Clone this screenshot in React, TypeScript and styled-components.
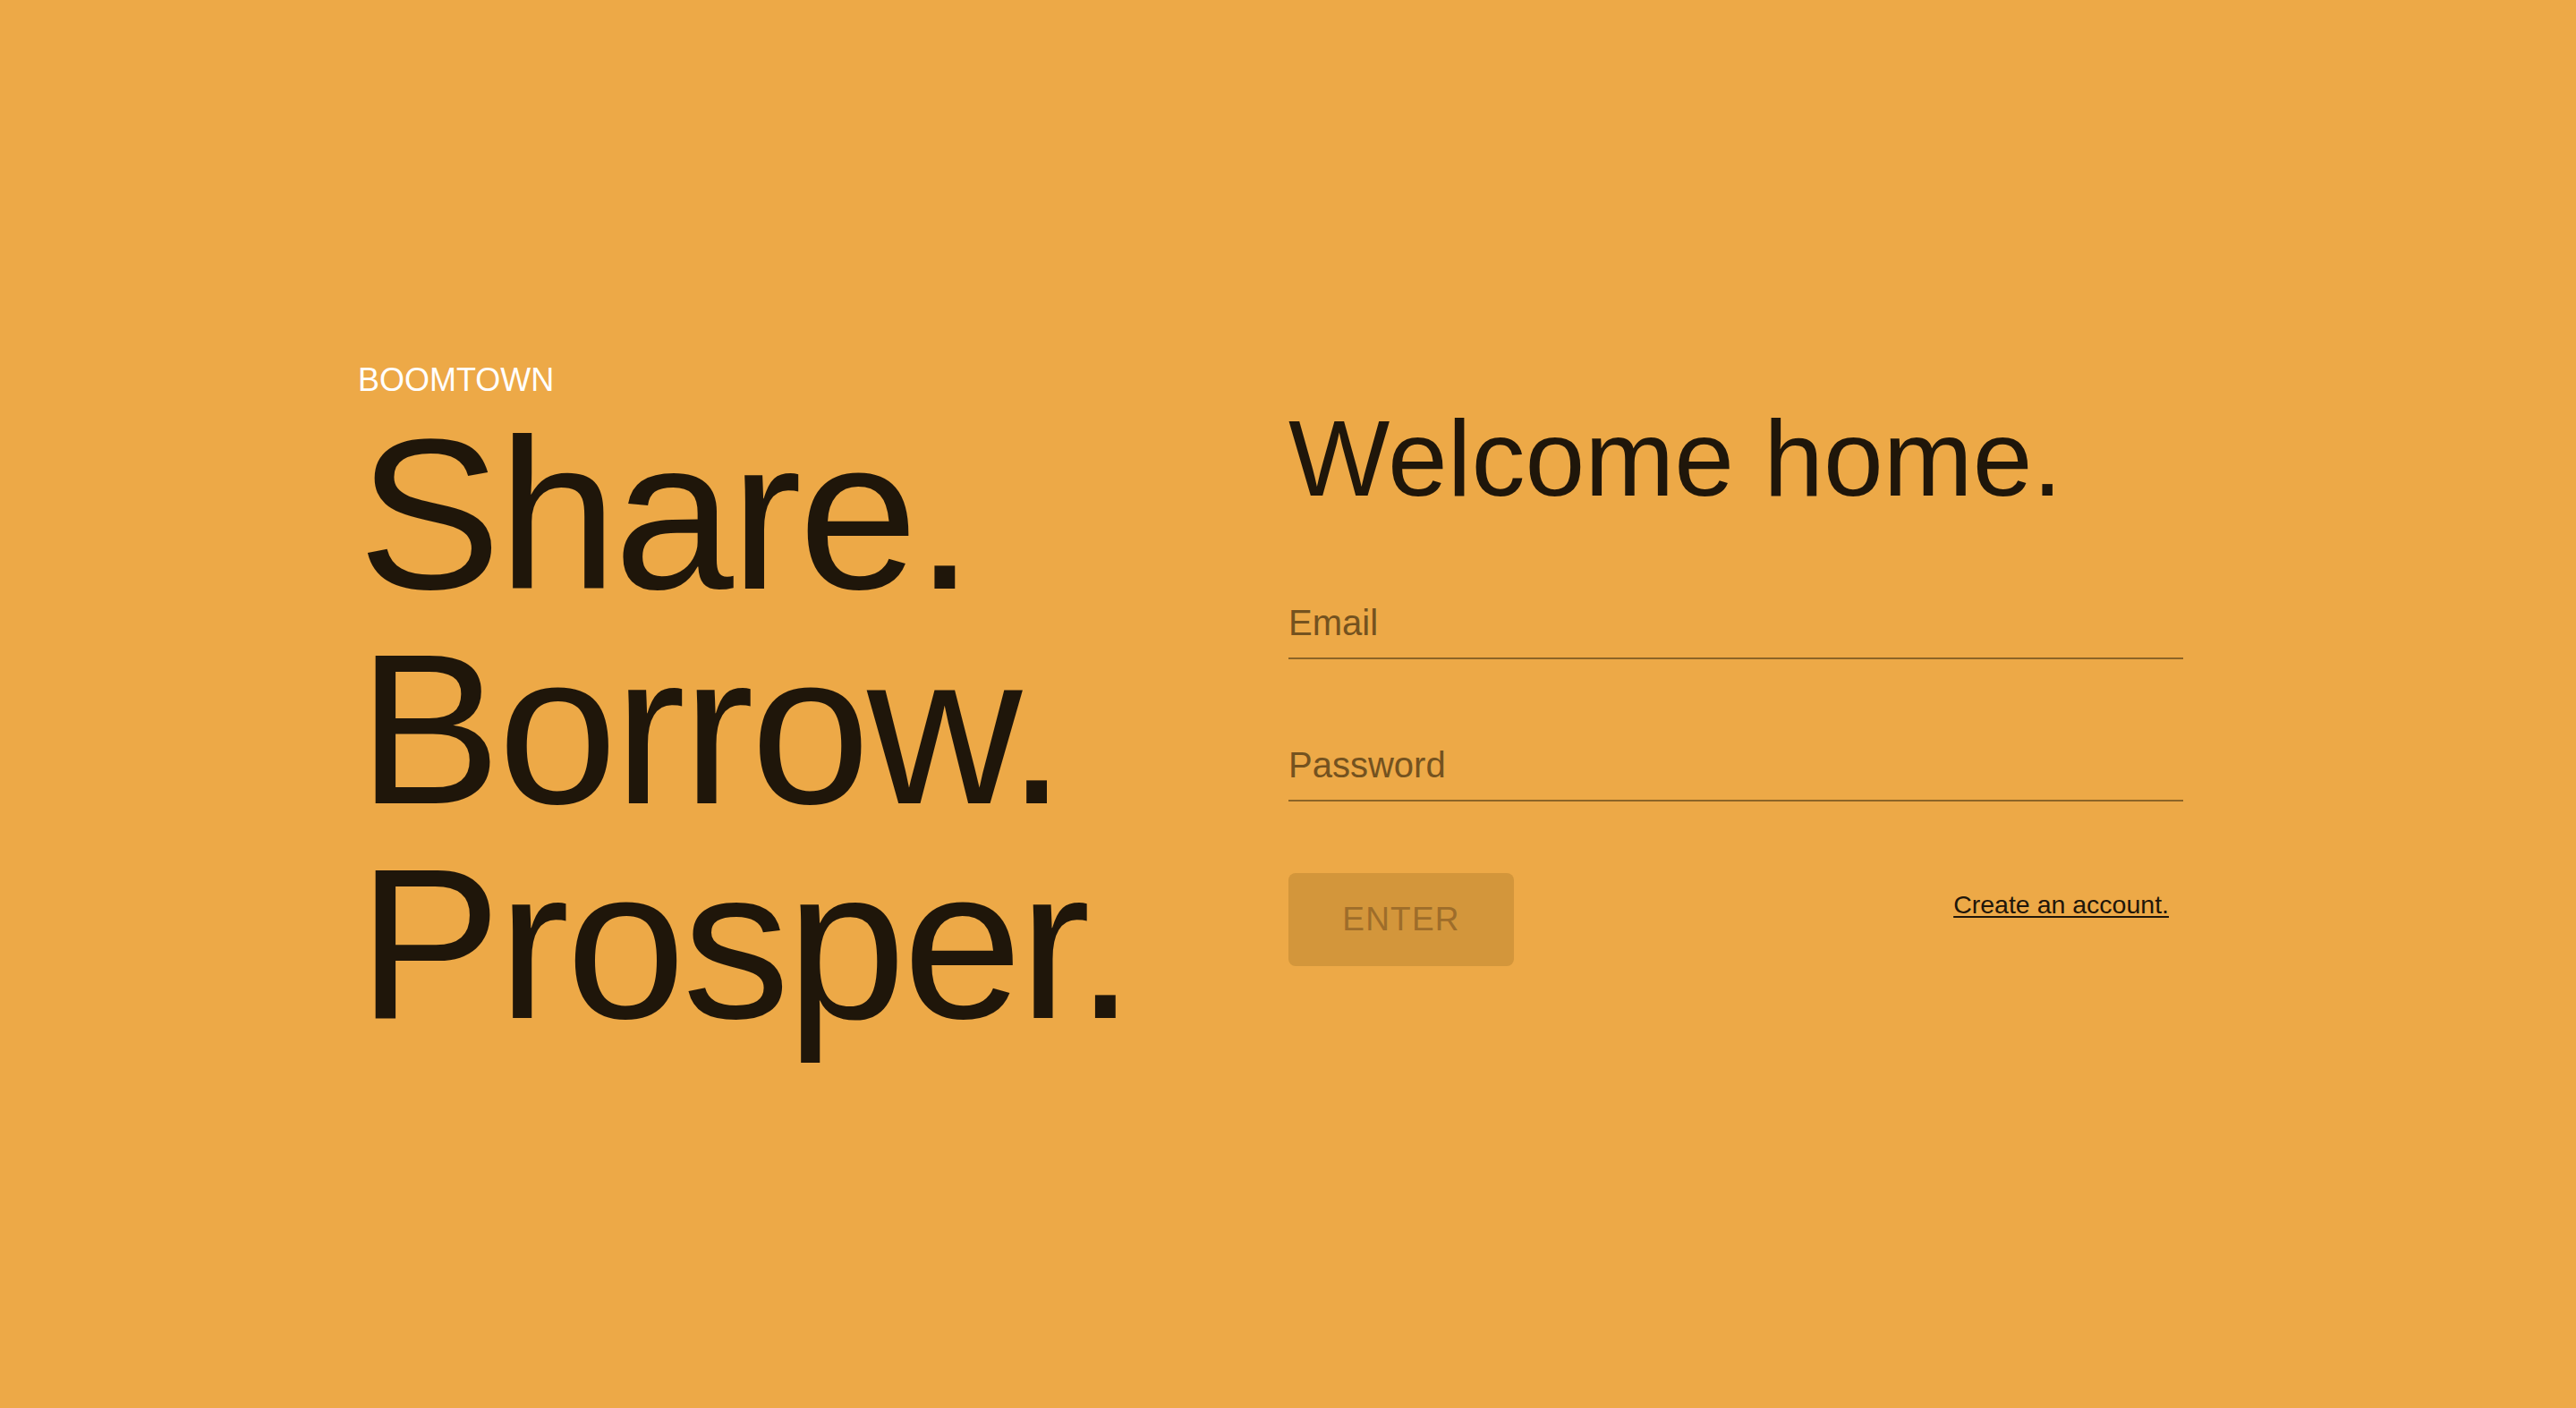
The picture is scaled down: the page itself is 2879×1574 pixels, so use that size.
import React from "react";
import styled, { createGlobalStyle } from "styled-components";

const GlobalStyle = createGlobalStyle`
  html, body {
    margin: 0;
    padding: 0;
    background: #eda947;
  }
  body {
    font-family: "Liberation Sans", Arial, Helvetica, sans-serif;
  }
  * { box-sizing: border-box; }
`;

const Page = styled.main`
  min-height: 100vh;
  background: #eda947;
  display: flex;
  align-items: flex-start;
  padding: 407px 0 0 400px;
`;

const Hero = styled.section`
  width: 1040px;
  display: flex;
  flex-direction: column;
`;

const Brand = styled.div`
  font-size: 36px;
  line-height: 36px;
  color: #ffffff;
  margin-bottom: 12px;
`;

const Headline = styled.h1`
  margin: 0;
  font-size: 240px;
  line-height: 240px;
  font-weight: 400;
  letter-spacing: -0.015em;
  color: #1f160a;
`;

const Line = styled.span`
  display: block;
`;

const Panel = styled.section`
  width: 1000px;
  margin-top: 45px;
  display: flex;
  flex-direction: column;
`;

const Welcome = styled.h2`
  margin: 0 0 104px;
  font-size: 120px;
  line-height: 120px;
  font-weight: 400;
  color: #1f160a;
`;

const Field = styled.label<{ $gap?: number }>`
  display: block;
  padding-bottom: 19px;
  border-bottom: 2px solid #8c6427;
  margin-bottom: ${(p) => p.$gap ?? 0}px;
`;

const FieldLabel = styled.span`
  display: block;
  font-size: 40px;
  line-height: 40px;
  color: #74521f;
`;

const Actions = styled.div`
  margin-top: 80px;
  display: flex;
  justify-content: space-between;
  align-items: flex-start;
`;

const EnterButton = styled.button`
  width: 252px;
  height: 104px;
  border: none;
  border-radius: 8px;
  background: #d3963b;
  color: #9e6d2a;
  font-family: "Liberation Sans", Arial, Helvetica, sans-serif;
  font-size: 37px;
  letter-spacing: 1.2px;
  padding: 0;
  display: flex;
  align-items: center;
  justify-content: center;
  cursor: default;
`;

const CreateLink = styled.a`
  margin-top: 21px;
  margin-right: 16px;
  font-size: 28.5px;
  line-height: 28px;
  color: #1f160a;
  text-decoration: underline;
  text-decoration-thickness: 2px;
  text-underline-offset: 3px;
  cursor: pointer;
`;

export default function App() {
  return (
    <>
      <GlobalStyle />
      <Page>
        <Hero>
          <Brand>BOOMTOWN</Brand>
          <Headline>
            <Line>Share.</Line>
            <Line>Borrow.</Line>
            <Line>Prosper.</Line>
          </Headline>
        </Hero>
        <Panel>
          <Welcome>Welcome home.</Welcome>
          <Field $gap={98}>
            <FieldLabel>Email</FieldLabel>
          </Field>
          <Field>
            <FieldLabel>Password</FieldLabel>
          </Field>
          <Actions>
            <EnterButton disabled>ENTER</EnterButton>
            <CreateLink>Create an account.</CreateLink>
          </Actions>
        </Panel>
      </Page>
    </>
  );
}
